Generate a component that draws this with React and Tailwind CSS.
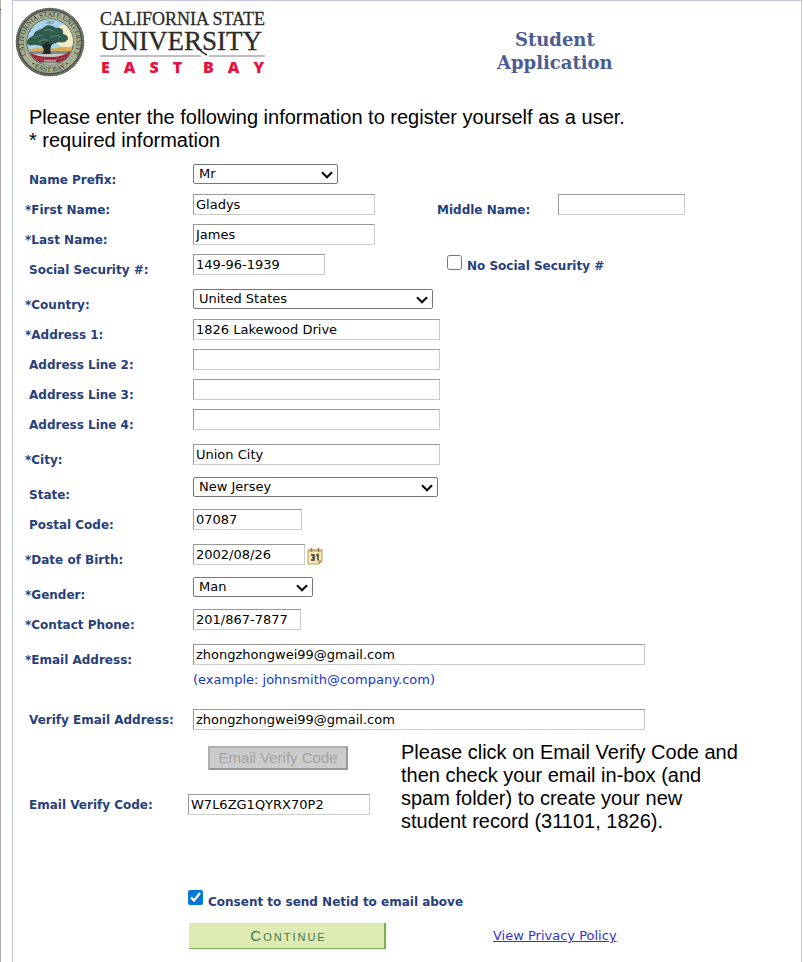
import React from "react";

const inputClass =
  "h-[21px] border border-t-[#999] border-l-[#999] border-r-[#ccc] border-b-[#ccc] bg-white px-[2px] text-[13px] leading-4 text-black outline-none";
const selectClass =
  "block h-5 w-full appearance-none rounded-[2px] border border-[#767676] bg-white pl-[5px] text-[13px] leading-4 text-black";
const labelClass = "text-[12px] leading-4 font-bold text-[#26407c]";

function Row({ id, label, required, height = "h-[30px]", labelPad = "pt-2", children }) {
  return (
    <div className={`flex items-start ${height}`}>
      <label
        htmlFor={id}
        className={`w-[168px] shrink-0 whitespace-nowrap ${labelPad} ${required ? "" : "pl-1"} ${labelClass}`}
      >
        {required ? "*" : ""}
        {label}
      </label>
      {children}
    </div>
  );
}

function Text({ id, value = "", width }) {
  return <input id={id} type="text" defaultValue={value} className={`${inputClass} ${width}`} />;
}

function Select({ id, value, width }) {
  return (
    <div className={`relative ${width}`}>
      <select id={id} defaultValue={value} className={selectClass}>
        <option>{value}</option>
      </select>
      <svg viewBox="0 0 12 8" className="pointer-events-none absolute top-[7px] right-[5px] h-2 w-3" aria-hidden="true">
        <path d="M1 1.3 L6 6.3 L11 1.3" fill="none" stroke="#000" strokeWidth="2" />
      </svg>
    </div>
  );
}

function Seal() {
  return (
    <svg viewBox="0 0 70 70" className="size-[70px] shrink-0" role="img" aria-label="University seal">
      <defs>
        <path id="sealTop" d="M 10.5 46 A 26.5 26.5 0 1 1 59.5 46" />
        <path id="sealBottom" d="M 12 54 A 30 30 0 0 0 58 54" />
        <clipPath id="sealScene">
          <circle cx="35" cy="35" r="23" />
        </clipPath>
      </defs>
      <circle cx="35" cy="35" r="34.3" fill="#55584f" />
      <circle cx="35" cy="35" r="33" fill="none" stroke="#8d9087" strokeWidth="1.2" strokeDasharray="1 1" />
      <circle cx="35" cy="35" r="31.6" fill="#a5ae91" stroke="#3d403a" strokeWidth="0.8" />
      <circle cx="35" cy="35" r="23.6" fill="#3f453d" />
      <g clipPath="url(#sealScene)">
        <rect x="10" y="10" width="50" height="50" fill="#a9d3ea" />
        <circle cx="51" cy="29" r="11.5" fill="#f4edc4" />
        <path d="M10 43 L22 41 L35 42 L48 40 L60 41 V47 H10 Z" fill="#d9ae52" />
        <path d="M10 45 L25 44 L60 44 V48 H10 Z" fill="#788b9c" />
        <path d="M10 47 H60 V60 H10 Z" fill="#c9c8c3" />
        <path
          d="M12 34 C14 29 19 30 19 27 C21 22 27 23 29 20 C34 16 39 20 41 21 C47 20 49 24 48 27 C54 28 54 33 51 34 C48 37 43 34 41 36 C37 38 33 36 29 38 C25 40 22 37 18 38 C14 39 10 37 12 34 Z"
          fill="#2e5b4d"
        />
        <path d="M19 31 Q24 27 28 29 M29 24 Q34 21 39 25 M34 31 Q40 27 46 30 M23 35 Q29 31 33 34" stroke="#4c7c69" strokeWidth="1.4" fill="none" />
        <path d="M26 38 Q31 37 33 34 Q34 38 38 36 Q34 41 36 47 L27 47 Q31 43 26 38 Z" fill="#1e2d29" />
        <path d="M14 45 Q21 50 35 50 Q49 50 55 44 L56 50 Q47 56 35 56 Q22 56 14 51 Z" fill="#9b2638" />
        <path d="M19 51 Q35 55 51 50" stroke="#d7949b" strokeWidth="0.8" strokeDasharray="1 1" fill="none" />
        <path d="M24 55 H46 V60 H24 Z" fill="#777d7b" />
        <path d="M29 54 H41 M28 57 H42" stroke="#e7e6df" strokeWidth="1" />
      </g>
      <g fontFamily="'Liberation Serif', serif" fill="#33392f">
        <text fontSize="7">
          <textPath href="#sealTop" startOffset="50%" textAnchor="middle">
            CALIFORNIA STATE UNIVERSITY
          </textPath>
        </text>
        <text fontSize="7">
          <textPath href="#sealBottom" startOffset="50%" textAnchor="middle">
            • EAST BAY •
          </textPath>
        </text>
        <text x="35" y="17" fontSize="4" textAnchor="middle">
          1957
        </text>
      </g>
    </svg>
  );
}

function Wordmark() {
  return (
    <svg viewBox="0 0 190 70" className="h-[70px] w-[190px] shrink-0" role="img" aria-label="California State University East Bay">
      <g fontFamily="'Liberation Serif', serif" fill="#2b2b2b" stroke="#2b2b2b" strokeWidth="0.3">
        <text x="1" y="18" fontSize="18">CALIFORNIA STATE</text>
        <text x="1" y="43" fontSize="27">UNIVERSITY</text>
      </g>
      <path d="M1 49 H102 M110 49 H166" stroke="#aaa" strokeWidth="1.4" />
      <path d="M94 33 Q99 44 108 48" stroke="#2b2b2b" strokeWidth="1.6" fill="none" />
      <g fontFamily="'Open Sans', sans-serif" fontWeight="800" fontSize="16" letterSpacing="14" fill="#e4123f">
        <text y="66" x="2">EAST</text>
        <text y="66" x="104">BAY</text>
      </g>
    </svg>
  );
}

function CalendarIcon() {
  return (
    <svg viewBox="0 0 16 18" className="h-[18px] w-4" aria-hidden="true">
      <path d="M1 3 H15 V14 L12 17 H1 Z" fill="#f5e7b8" stroke="#b99a5c" />
      <path d="M1 3.5 H15" stroke="#c8aa6c" strokeWidth="2" />
      <path d="M11.5 17 V13.5 H15 Z" fill="#b48d4c" />
      <path d="M4.5 1 V5 M11.5 1 V5" stroke="#9b7f4a" strokeWidth="1.4" />
      <path d="M4 8 H7 V13 H4 M5 10.5 H7 M9.3 8.5 L11 7.7 V13.5" stroke="#333" strokeWidth="1.4" fill="none" />
    </svg>
  );
}

export default function App() {
  return (
    <div className="flex min-h-screen bg-white font-['DejaVu_Sans',Verdana,sans-serif]">
      <div className="flex w-px shrink-0 flex-col bg-[#a8a8a8]">
        <div className="h-2.5 border-b border-[#33334d] bg-[#b5b0a0]" />
      </div>
      <main className="mr-px ml-[11px] flex-1 border border-b-0 border-[#bfc5dc]">
        <header className="flex h-[88px] items-start pt-1.5 pl-[2px]">
          <Seal />
          <div className="ml-3.5">
            <Wordmark />
          </div>
          <h1 className="ml-[208px] pt-[21px] text-center font-['DejaVu_Serif',Georgia,serif] text-[18px] leading-[23px] font-bold text-[#4a5c94]">
            Student
            <br />
            Application
          </h1>
        </header>

        <form className="pl-3" onSubmit={(e) => e.preventDefault()}>
          <p className="mt-[17px] pl-1 font-['Liberation_Sans',Arial,sans-serif] text-[20px] leading-[23px] text-black">
            Please enter the following information to register yourself as a user.
            <br />* required information
          </p>

          <div className="mt-3">
            <Row id="prefix" label="Name Prefix:">
              <Select id="prefix" value="Mr" width="w-[145px]" />
            </Row>
            <Row id="first" label="First Name:" required>
              <div className="flex w-[244px] shrink-0">
                <Text id="first" value="Gladys" width="w-[182px]" />
              </div>
              <label htmlFor="middle" className={`w-[121px] shrink-0 pt-2 ${labelClass}`}>
                Middle Name:
              </label>
              <Text id="middle" width="w-[127px]" />
            </Row>
            <Row id="last" label="Last Name:" required>
              <Text id="last" value="James" width="w-[182px]" />
            </Row>
            <Row id="ssn" label="Social Security #:" height="h-[35px]">
              <div className="flex w-[254px] shrink-0">
                <Text id="ssn" value="149-96-1939" width="w-[132px]" />
              </div>
              <input id="nossn" type="checkbox" className="mt-px size-[15px]" />
              <label htmlFor="nossn" className={`pt-1 pl-[5px] ${labelClass}`}>
                No Social Security #
              </label>
            </Row>
            <Row id="country" label="Country:" required>
              <Select id="country" value="United States" width="w-[240px]" />
            </Row>
            <Row id="addr1" label="Address 1:" required>
              <Text id="addr1" value="1826 Lakewood Drive" width="w-[247px]" />
            </Row>
            <Row id="addr2" label="Address Line 2:">
              <Text id="addr2" width="w-[247px]" />
            </Row>
            <Row id="addr3" label="Address Line 3:">
              <Text id="addr3" width="w-[247px]" />
            </Row>
            <Row id="addr4" label="Address Line 4:" height="h-[35px]">
              <Text id="addr4" width="w-[247px]" />
            </Row>
            <Row id="city" label="City:" required height="h-[33px]">
              <Text id="city" value="Union City" width="w-[247px]" />
            </Row>
            <Row id="state" label="State:" height="h-8" labelPad="pt-2.5">
              <Select id="state" value="New Jersey" width="w-[245px]" />
            </Row>
            <Row id="postal" label="Postal Code:" height="h-[35px]">
              <Text id="postal" value="07087" width="w-[109px]" />
            </Row>
            <Row id="dob" label="Date of Birth:" required height="h-[33px]">
              <Text id="dob" value="2002/08/26" width="w-[112px]" />
              <button type="button" aria-label="Choose date" className="mt-[3px] ml-[2px]">
                <CalendarIcon />
              </button>
            </Row>
            <Row id="gender" label="Gender:" required height="h-8" labelPad="pt-2.5">
              <Select id="gender" value="Man" width="w-[120px]" />
            </Row>
            <Row id="phone" label="Contact Phone:" required height="h-[35px]">
              <Text id="phone" value="201/867-7877" width="w-[108px]" />
            </Row>
            <Row id="email" label="Email Address:" required height="h-[65px]">
              <div className="flex-1">
                <input
                  id="email"
                  type="text"
                  defaultValue="zhongzhongwei99@gmail.com"
                  className={`block w-full max-w-[452px] ${inputClass}`}
                />
                <p className="pt-[7px] text-[13px] leading-4 text-[#1438c8]">(example: johnsmith@company.com)</p>
              </div>
            </Row>
            <Row id="email2" label="Verify Email Address:" height="h-8" labelPad="pt-[3px]">
              <div className="flex-1">
                <input
                  id="email2"
                  type="text"
                  defaultValue="zhongzhongwei99@gmail.com"
                  className={`block w-full max-w-[452px] ${inputClass}`}
                />
              </div>
            </Row>
          </div>

          <div className="flex items-start">
            <div className="w-[376px] shrink-0 pt-[5px]">
              <button
                type="button"
                disabled
                className="ml-[183px] block h-6 w-[140px] border-2 border-t-[#b0b0b0] border-l-[#b0b0b0] border-r-[#999] border-b-[#999] bg-[#ccc] font-['Liberation_Sans',Arial,sans-serif] text-[15px] leading-5 text-[#a3a3a3]"
              >
                Email Verify Code
              </button>
              <div className="mt-6 flex items-start">
                <label htmlFor="code" className={`w-[163px] shrink-0 pt-[3px] pl-1 ${labelClass}`}>
                  Email Verify Code:
                </label>
                <Text id="code" value="W7L6ZG1QYRX70P2" width="w-[182px]" />
              </div>
            </div>
            <p className="max-w-[345px] font-['Liberation_Sans',Arial,sans-serif] text-[20px] leading-[23px] text-black">
              Please click on Email Verify Code and then check your email in-box (and spam folder) to create your new
              student record (31101, 1826).
            </p>
          </div>

          <div className="mt-[57px] ml-[163px] flex items-start">
            <input id="consent" type="checkbox" defaultChecked className="size-[15px] accent-[#0078d4]" />
            <label htmlFor="consent" className={`pt-1 pl-[5px] ${labelClass}`}>
              Consent to send Netid to email above
            </label>
          </div>

          <div className="mt-[13px] ml-[164px] flex items-center">
            <button
              type="submit"
              className="h-[26px] w-[197px] border-r-2 border-b border-[#78b04c] bg-[#deebb4] pl-1 font-['Liberation_Sans',Arial,sans-serif] text-[15px] leading-5 tracking-[2px] text-[#3f7a4a] [font-variant-caps:small-caps]"
            >
              Continue
            </button>
            <a href="#privacy" className="ml-[107px] text-[13px] leading-4 text-[#3333cc] underline">
              View Privacy Policy
            </a>
          </div>
        </form>
      </main>
    </div>
  );
}
